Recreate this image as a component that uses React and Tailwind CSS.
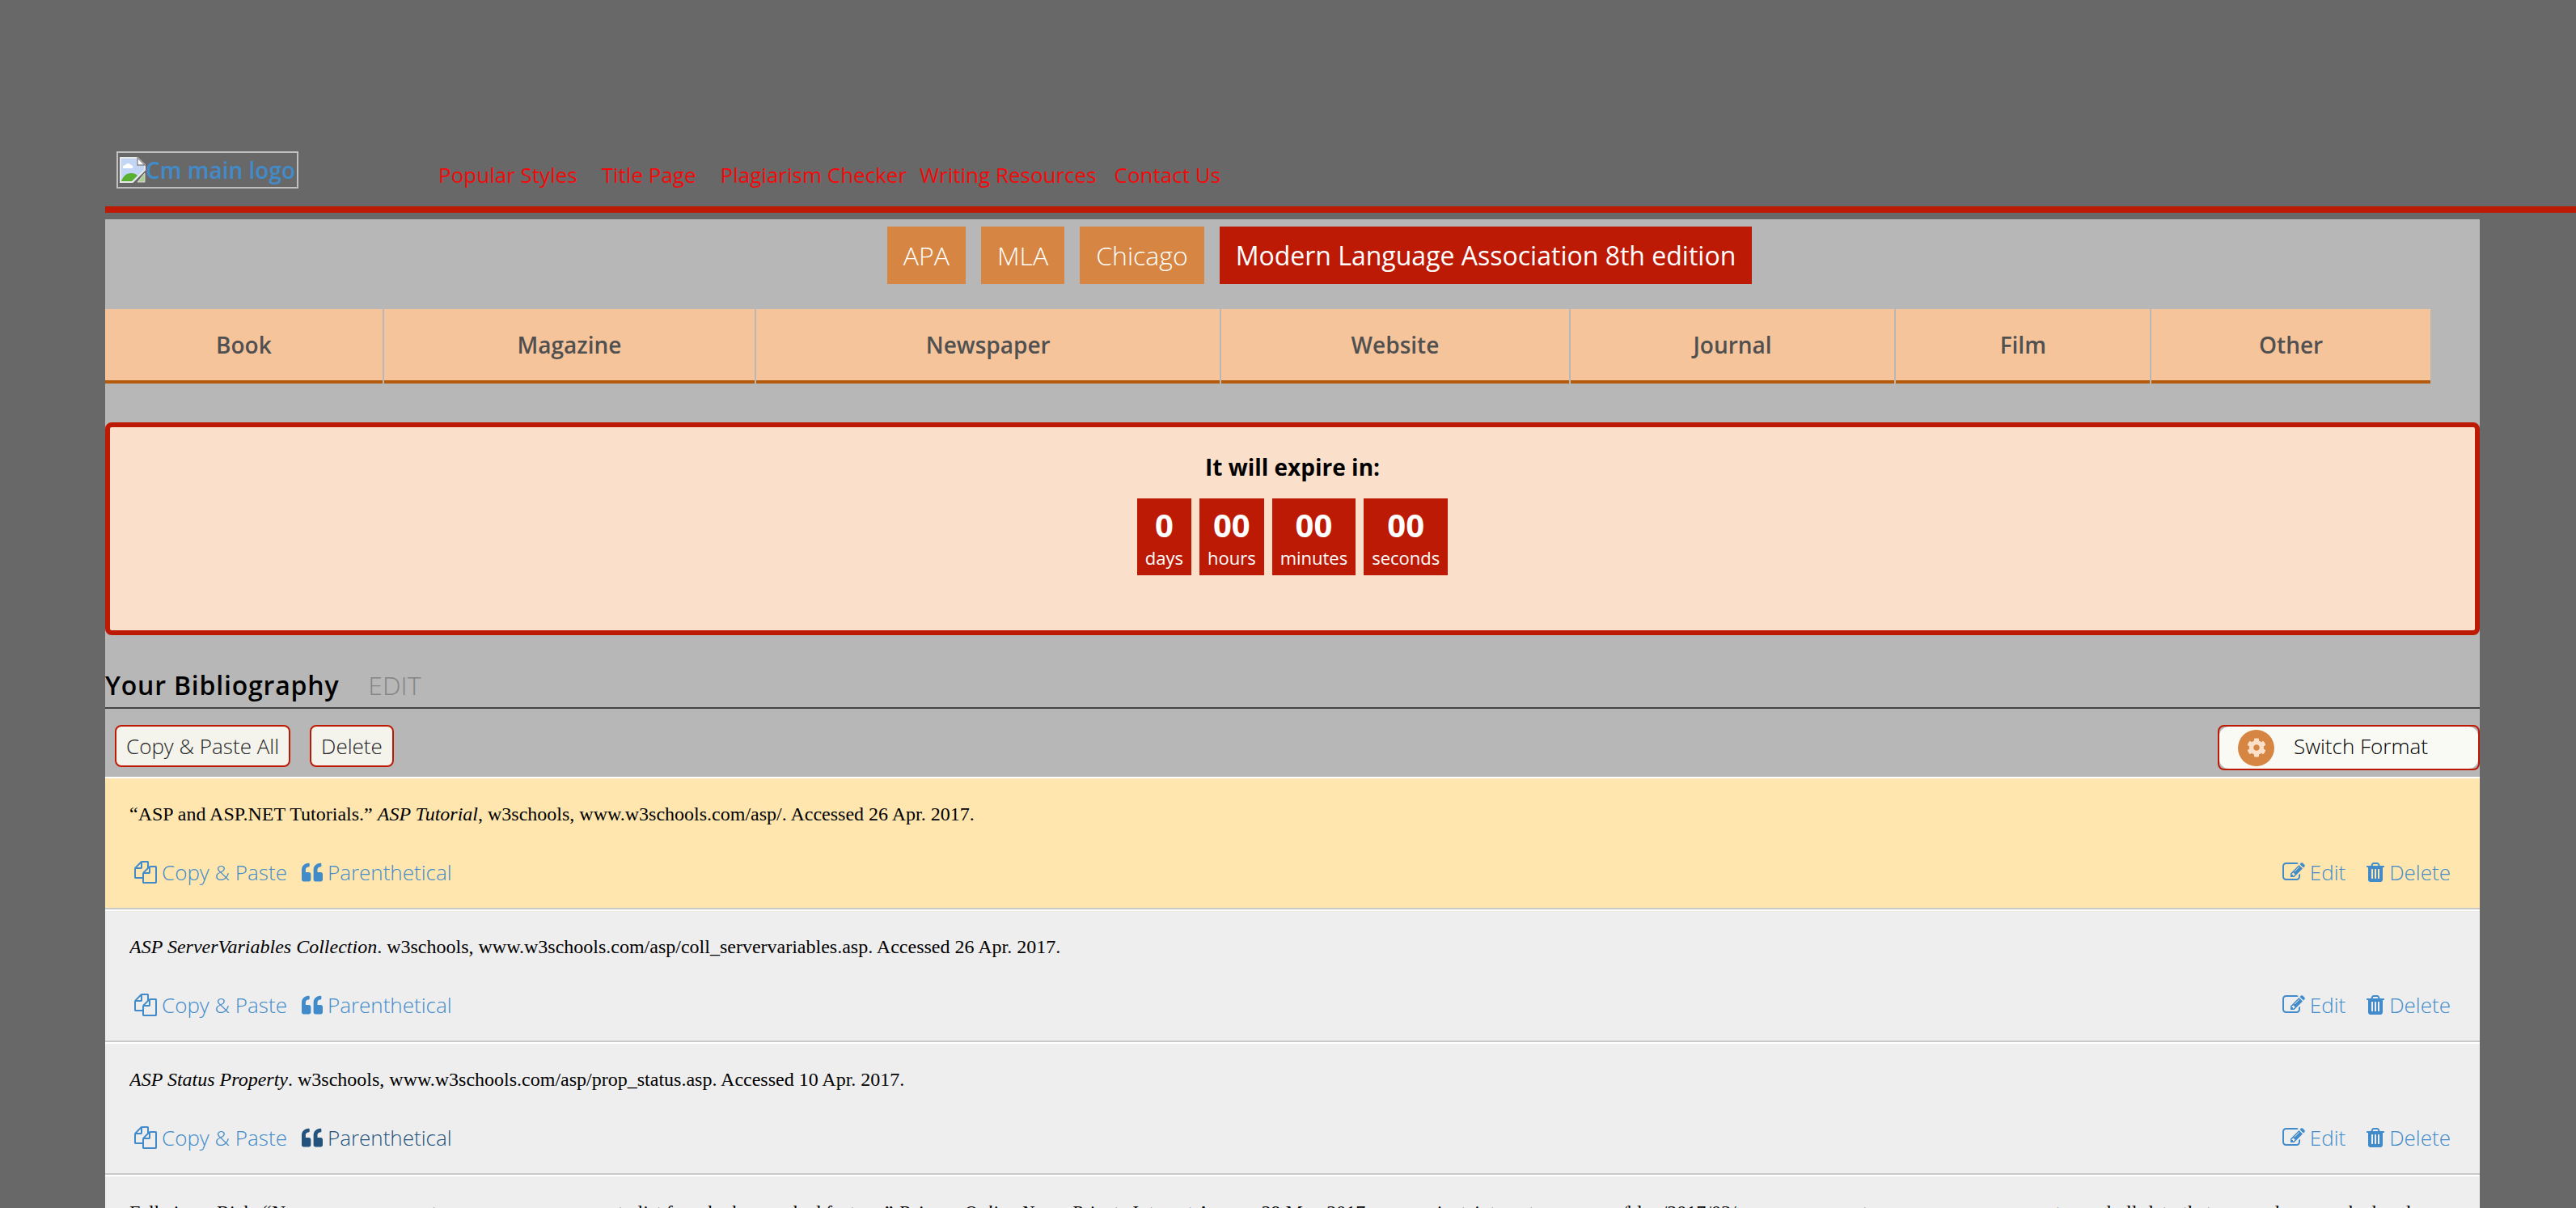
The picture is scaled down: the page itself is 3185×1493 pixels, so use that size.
import { FaQuoteLeft, FaCog } from "react-icons/fa";

const navLinks = [
  { label: "Popular Styles", space: "mr-[30px]" },
  { label: "Title Page", space: "mr-[30px]" },
  { label: "Plagiarism Checker", space: "mr-4" },
  { label: "Writing Resources", space: "mr-[22px]" },
  { label: "Contact Us", space: "" },
];

const sources = [
  { label: "Book", grow: "grow-[344]" },
  { label: "Magazine", grow: "grow-[460]" },
  { label: "Newspaper", grow: "grow-[575]" },
  { label: "Website", grow: "grow-[431]" },
  { label: "Journal", grow: "grow-[402]" },
  { label: "Film", grow: "grow-[315]" },
  { label: "Other", grow: "grow-[346]" },
];

const countdown = [
  ["0", "days"],
  ["00", "hours"],
  ["00", "minutes"],
  ["00", "seconds"],
];

const entries = [
  {
    active: true,
    body: (
      <>
        “ASP and ASP.NET Tutorials.” <i>ASP Tutorial</i>, w3schools, www.w3schools.com/asp/. Accessed 26 Apr. 2017.
      </>
    ),
  },
  {
    body: (
      <>
        <i>ASP ServerVariables Collection</i>. w3schools, www.w3schools.com/asp/coll_servervariables.asp. Accessed 26 Apr. 2017.
      </>
    ),
  },
  {
    visited: true,
    body: (
      <>
        <i>ASP Status Property</i>. w3schools, www.w3schools.com/asp/prop_status.asp. Accessed 10 Apr. 2017.
      </>
    ),
  },
  {
    body: (
      <>
        Falkvinge, Rick. “New our government across every new county list for who has marked feature.” <i>Privacy Online News</i>, Private Internet Access, 29 Mar. 2017, www.privateinternetaccess.com/blog/2017/03/new-government-across-every-new-country-and-all-data-that-us-can-have-marked-and-used/.
      </>
    ),
  },
];

function FilesIcon() {
  return (
    <svg viewBox="0 0 1792 1792" className="size-7 shrink-0" fill="currentColor" aria-hidden="true">
      <path d="M1696 384q40 0 68 28t28 68v1216q0 40-28 68t-68 28h-960q-40 0-68-28t-28-68v-288h-544q-40 0-68-28t-28-68v-672q0-40 20-88t48-76l408-408q28-28 76-48t88-20h416q40 0 68 28t28 68v328q68-40 128-40h416zm-544 213l-299 299h299v-299zm-640-384l-299 299h299v-299zm196 647l316-316v-416h-384v416q0 40-28 68t-68 28h-416v640h512v-256q0-40 20-88t48-76zm956 804v-1152h-384v416q0 40-28 68t-68 28h-416v640h896z" />
    </svg>
  );
}

function EditIcon() {
  return (
    <svg viewBox="0 0 1792 1792" className="size-7 shrink-0" fill="currentColor" aria-hidden="true">
      <path d="M888 1184l116-116-152-152-116 116v56h96v96h56zm440-720q-16-16-33 1l-350 350q-17 17-1 33t33-1l350-350q17-17 1-33zm80 594v190q0 119-84.500 203.500t-203.500 84.500h-832q-119 0-203.500-84.500t-84.500-203.500v-832q0-119 84.500-203.500t203.500-84.500h832q63 0 117 25 15 7 18 23 3 17-9 29l-49 49q-14 14-32 8-23-6-45-6h-832q-66 0-113 47t-47 113v832q0 66 47 113t113 47h832q66 0 113-47t47-113v-126q0-13 9-22l64-64q15-15 35-7t20 29zm-96-738l288 288-672 672h-288v-288zm444 132l-92 92-288-288 92-92q28-28 68-28t68 28l152 152q28 28 28 68t-28 68z" />
    </svg>
  );
}

function TrashIcon() {
  return (
    <svg viewBox="0 0 1408 1536" className="h-6 w-[22px] shrink-0" fill="currentColor" aria-hidden="true">
      <path d="M512 1248v-704q0-14-9-23t-23-9h-64q-14 0-23 9t-9 23v704q0 14 9 23t23 9h64q14 0 23-9t9-23zm256 0v-704q0-14-9-23t-23-9h-64q-14 0-23 9t-9 23v704q0 14 9 23t23 9h64q14 0 23-9t9-23zm256 0v-704q0-14-9-23t-23-9h-64q-14 0-23 9t-9 23v704q0 14 9 23t23 9h64q14 0 23-9t9-23zm-544-992h448l-48-117q-7-9-17-11h-317q-10 2-17 11zm928 32v64q0 14-9 23t-23 9h-96v948q0 83-47 143.500t-113 60.500h-832q-66 0-113-58.500t-47-141.500v-952h-96q-14 0-23-9t-9-23v-64q0-14 9-23t23-9h309l70-167q15-37 54-63t79-26h320q40 0 79 26t54 63l70 167h309q14 0 23 9t9 23z" />
    </svg>
  );
}

function BrokenImage() {
  return (
    <svg viewBox="0 0 16 16" className="size-8 shrink-0" aria-hidden="true">
      <path d="M0.500 0.500H11l4.500 4.500V8L8 15.500H0.500z" fill="#c3d5f5" stroke="#e8e8e8" />
      <path d="M11 0.500V5h4.500z" fill="#fff" stroke="#8a8a8a" strokeWidth="0.700" />
      <path d="M2 7a1.500 1.500 0 0 1 1.500-2 2 2 0 0 1 3.500 0A1.300 1.300 0 0 1 8 7z" fill="#fff" />
      <path d="M1 15c1-3 3-5 6-5 2 0 3 .5 4 1.500L7.500 15z" fill="#58b030" />
      <path d="M15.500 10v5.500H11z" fill="#a9d08e" stroke="#d8d8d8" strokeWidth="0.500" />
    </svg>
  );
}

function Entry({ active, visited, body }) {
  return (
    <li className={`border-t-2 border-b-2 border-t-white border-b-[#c9c9c9] pt-7 pr-9 pb-[23px] pl-[30px] ${active ? "bg-[#ffe6ae]" : "bg-[#eeeeee]"}`}>
      <p className="truncate font-['Liberation_Serif',serif] text-2xl leading-8 text-black">{body}</p>
      <div className="mt-[35px] flex justify-between pl-1.5 text-[26px] leading-[42px] font-light text-[#428bca]">
        <div className="flex gap-[18px]">
          <a href="#copy" className="flex items-center gap-1.5">
            <FilesIcon />
            Copy &amp; Paste
          </a>
          <a href="#parenthetical" className={`flex items-center gap-1.5 ${visited ? "text-[#23527c]" : ""}`}>
            <FaQuoteLeft className="size-[26px]" />
            Parenthetical
          </a>
        </div>
        <div className="flex gap-[26px]">
          <a href="#edit" className="flex items-center gap-1.5">
            <EditIcon />
            Edit
          </a>
          <a href="#delete" className="flex items-center gap-1.5">
            <TrashIcon />
            Delete
          </a>
        </div>
      </div>
    </li>
  );
}

export default function App() {
  return (
    <div className="h-screen overflow-hidden bg-[#686868] pl-[130px] font-['Open_Sans',sans-serif]">
      <header className="flex items-start border-b-8 border-[#bd1a06] pt-[187px] pb-[22px]">
        <a href="#home" className="ml-3.5 flex h-[46px] items-center border-2 border-[#c0c0c0] px-0.5 text-[28px] font-semibold whitespace-nowrap text-[#428bca]">
          <BrokenImage />
          Cm main logo
        </a>
        <nav className="mt-[13px] ml-[173px] flex text-[26px] leading-8 whitespace-nowrap text-[#f50808]">
          {navLinks.map((l) => (
            <a key={l.label} href="#nav" className={l.space}>
              {l.label}
            </a>
          ))}
        </nav>
      </header>

      <main className="mt-2 mr-[119px] bg-[#b7b7b7] pt-[9px]">
        <div className="flex justify-center gap-[19px] pl-[67px] text-[32px] leading-[71px] font-light text-white">
          <button className="bg-[#d68642] px-5">APA</button>
          <button className="bg-[#d68642] px-5">MLA</button>
          <button className="bg-[#d68642] px-5">Chicago</button>
          <button className="bg-[#bd1a06] px-5 font-normal">Modern Language Association 8th edition</button>
        </div>

        <div className="mt-[31px] mr-[61px] flex gap-0.5 text-[28px] leading-[88px] font-semibold text-[#505050]">
          {sources.map((s) => (
            <button key={s.label} className={`basis-0 border-b-4 border-[#b45a0c] bg-[#f6c49b] ${s.grow}`}>
              {s.label}
            </button>
          ))}
        </div>

        <section className="mt-12 flex flex-col items-center rounded-lg border-6 border-[#bd1a06] bg-[#fae0ca] pt-[29px] pb-[68px]">
          <h2 className="text-[28px] leading-10 font-bold text-black">It will expire in:</h2>
          <div className="mt-[19px] flex gap-2.5 text-center text-white">
            {countdown.map(([value, unit]) => (
              <div key={unit} className="bg-[#bd1a06] px-2.5 pt-2.5 pb-1">
                <div className="text-[40px] leading-[46px] font-bold">{value}</div>
                <div className="text-[22px] leading-[35px]">{unit}</div>
              </div>
            ))}
          </div>
        </section>

        <div className="mt-[37px] flex items-baseline gap-9 border-b-2 border-[#444444] pb-0.5 text-[32px] leading-[50px]">
          <h1 className="font-semibold tracking-wide text-black">Your Bibliography</h1>
          <button className="font-light text-[#858585]">EDIT</button>
        </div>

        <div className="flex items-start justify-between pt-5 pb-2 text-[26px] font-light">
          <div className="flex gap-6 pl-3 leading-12 text-[#222]">
            <button className="rounded-lg border-2 border-[#bd1a06] bg-[#f4f4ec] px-3">Copy &amp; Paste All</button>
            <button className="rounded-lg border-2 border-[#bd1a06] bg-[#f4f4ec] px-3">Delete</button>
          </div>
          <button className="flex h-14 w-[324px] items-center rounded-lg border-2 border-[#bd1a06] bg-[#b7b7b7] text-black">
            <span className="flex h-full w-full items-center gap-6 rounded-xl bg-[#fafaf5] pl-[23px]">
              <span className="flex size-[45px] items-center justify-center rounded-full bg-[#d68642] text-[#fae0ca]">
                <FaCog className="size-6" />
              </span>
              <span className="pb-1">Switch Format</span>
            </span>
          </button>
        </div>

        <ul>
          {entries.map((e, i) => (
            <Entry key={i} {...e} />
          ))}
        </ul>
      </main>
    </div>
  );
}
